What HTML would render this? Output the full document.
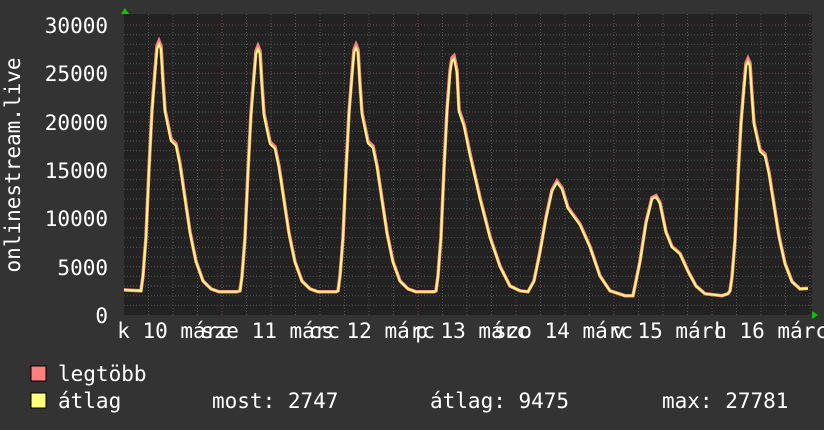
<!DOCTYPE html>
<html><head><meta charset="utf-8"><style>
html,body{margin:0;padding:0;background:#333;}
svg{display:block}
text{font-family:"DejaVu Sans Mono","Liberation Mono",monospace;font-size:21px;fill:#fff;}
</style></head><body>
<svg id="s" width="824" height="430" xmlns="http://www.w3.org/2000/svg">
<rect width="824" height="430" fill="#333"/>
<rect x="124" y="14" width="688" height="301" fill="#222"/>
<g id="grid"></g>
<polyline id="pmax" fill="none" stroke="#ff7f7f" stroke-width="3.5" points=""/>
<polyline id="pavg" fill="none" stroke="#ffff7f" stroke-width="2" points=""/>
<polygon points="121,14 129,14 125,8" fill="#0c0"/>
<polygon points="812,311 812,319 818,315" fill="#0c0"/>
<g text-anchor="end">
<text x="108" y="33">30000</text>
<text x="108" y="81">25000</text>
<text x="108" y="130">20000</text>
<text x="108" y="178">15000</text>
<text x="108" y="226">10000</text>
<text x="108" y="275">5000</text>
<text x="108" y="323">0</text>
</g>
<text transform="translate(20,165) rotate(-90)" text-anchor="middle">onlinestream.live</text>
<g id="xl"></g>
<rect x="31" y="366" width="15" height="15" fill="#ff7f7f" stroke="#000" stroke-width="1"/>
<rect x="31" y="393" width="15" height="15" fill="#ffff7f" stroke="#000" stroke-width="1"/>
<text x="58" y="381">legtöbb</text>
<text x="58" y="408">átlag</text>
<text x="212" y="408">most: 2747</text>
<text x="430" y="408">átlag: 9475</text>
<text x="662" y="408">max: 27781</text>
</svg>
<script>
var NS="http://www.w3.org/2000/svg";
function Y(v){return 315-v*290/30000;}
var g=document.getElementById('grid'),h='';
for(var v=1000;v<=30000;v+=1000){var y=Y(v).toFixed(1);var maj=v%5000==0;
h+='<line x1="124" x2="812" y1="'+y+'" y2="'+y+'" stroke="'+(maj?'#6a4a4a':'#555')+'" stroke-dasharray="1,2" stroke-width="1"/>';}
for(var x=148.5;x<812;x+=24.5){var k=Math.round((x-148.5)/24.5);var maj=(k%4==3);
h+='<line y1="14" y2="315" x1="'+x+'" x2="'+x+'" stroke="'+(maj?'#6a4a4a':'#555')+'" stroke-dasharray="1,2" stroke-width="1"/>';}
g.innerHTML=h;
var T=[[-18,2500],[-16,4000],[-13,8000],[-10,15000],[-7,21000],[-4,25000],[-2,27500],[0,28000],[2,27500],[4,24000],[6,21000],[9,19500],[12,18000],[17,17500],[21,15500],[26,12000],[31,8500],[37,5500],[44,3500],[52,2700],[60,2400],[78,2400]];
var pts=[[124,2600],[140,2500]];
function day(p,s,last){for(var i=0;i<T.length;i++){var v=T[i][1];var vv=v>3000?2400+(v-2400)*s:v;if(last&&T[i][0]>57)break;pts.push([p+T[i][0],vv]);}}
day(159,1,0);day(258,0.98,0);day(356,0.985,0);
pts.push([436,2500],[438,4000],[441,8000],[444,15000],[447,21000],[450,25000],[452,26300],[454,26500],[457,25000],[459,21000],[464,19500],[470,16500],[480,12000],[490,8000],[500,5000],[510,3000],[520,2500],[528,2400],
[534,3500],[540,6500],[546,10000],[552,12800],[557,13700],[562,13000],[568,11000],[580,9300],[590,7000],[600,4000],[610,2500],[625,2000],[633,2000],
[640,5500],[646,9500],[652,12000],[656,12200],[660,11500],[666,8500],[672,7000],[680,6300],[688,4500],[696,3000],[705,2200],[722,2000],[728,2200]);
day(748,0.93,1);pts.push([808,2747]);
var a=pts.map(function(p){return p[0]+','+Y(p[1]).toFixed(1)}).join(' ');
var b=pts.map(function(p){return p[0]+','+Y(p[1]>3000?p[1]*1.012:p[1]).toFixed(1)}).join(' ');
document.getElementById('pavg').setAttribute('points',a);
document.getElementById('pmax').setAttribute('points',b);
var L=[["k ","10",155],["sze ","11",264],["cs ","12",359],["p ","13",453],["szo ","14",557],["v ","15",650],["h ","16",752]];
var xl='';L.forEach(function(l){var x0=l[2]-12.6-l[0].length*12.6;xl+='<text x="'+x0+'" y="338" xml:space="preserve">'+l[0]+l[1]+' márc</text>';});
document.getElementById('xl').innerHTML=xl;
</script>
</body></html>
